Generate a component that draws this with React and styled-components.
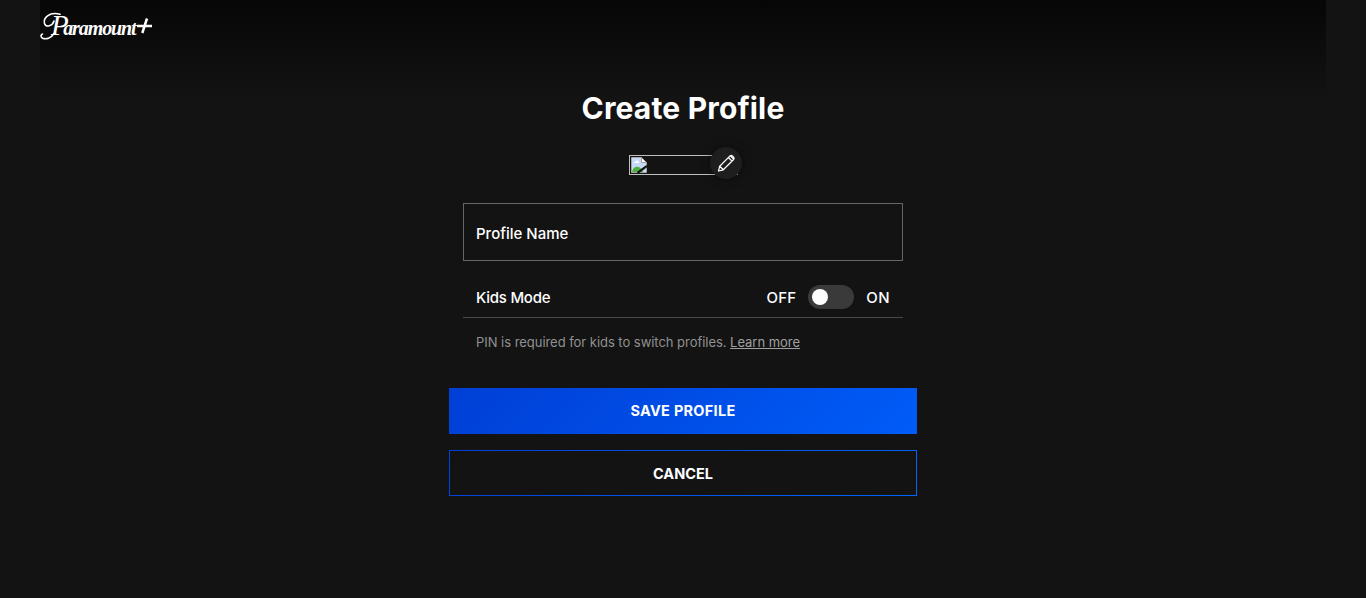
import React from "react";
import styled, { createGlobalStyle } from "styled-components";

const GlobalStyle = createGlobalStyle`
  *, *::before, *::after { box-sizing: border-box; }
  html, body { margin: 0; background: #131313; }
  body {
    color: #fff;
    font-family: Inter, "Liberation Sans", sans-serif;
    overflow: hidden;
  }
`;

const Page = styled.div`
  display: flex;
  flex-direction: column;
  height: 598px;
  background: #131313;
`;

const Header = styled.header`
  height: 100px;
  margin: 0 40px -10px;
  padding-top: 8px;
  background: linear-gradient(180deg, #060606 0%, #131313 100%);
  flex-shrink: 0;
`;

const Logo = styled.svg`
  display: block;
  overflow: visible;
`;

const Main = styled.main`
  display: flex;
  flex-direction: column;
  align-items: center;
`;

const Title = styled.h1`
  margin: 0;
  height: 36px;
  line-height: 36px;
  font-size: 30px;
  font-weight: 700;
  letter-spacing: 0.17px;
  white-space: nowrap;
`;

const Avatar = styled.div`
  position: relative;
  width: 108px;
  height: 20px;
  margin: 29px 0 28px;
`;

const BrokenImage = styled.div`
  width: 109px;
  height: 20px;
  padding: 1px;
  border: 1px solid #c0c0c0;
`;

const EditButton = styled.button`
  position: absolute;
  left: 81px;
  top: -8px;
  width: 32px;
  height: 32px;
  display: grid;
  place-items: center;
  padding: 0;
  border: 0;
  border-radius: 50%;
  background: #1e1e1e;
  box-shadow: 0 0 10px rgba(0, 0, 0, 0.5);
`;

const Form = styled.form`
  width: 440px;
  display: flex;
  flex-direction: column;
`;

const NameField = styled.label`
  height: 58px;
  padding: 2px 12px 0;
  display: flex;
  align-items: center;
  border: 1px solid #666;
  font-size: 15px;
  font-weight: 500;
`;

const KidsRow = styled.div`
  height: 57px;
  padding: 16px 13px 0;
  display: flex;
  align-items: center;
  border-bottom: 1px solid #484848;
  font-size: 15px;
  font-weight: 500;
`;

const Label = styled.span`
  letter-spacing: ${({ $tracking }) => $tracking || "0"};
  white-space: nowrap;
`;

const SwitchGroup = styled.div`
  margin-left: auto;
  display: flex;
  align-items: center;
  gap: 12px;
`;

const Switch = styled.span`
  width: 46px;
  height: 24px;
  padding: 4px;
  border-radius: 12px;
  background: #3a3a3a;
`;

const Knob = styled.span`
  display: block;
  width: 16px;
  height: 16px;
  border-radius: 50%;
  background: #fff;
`;

const Hint = styled.p`
  height: 20px;
  margin: 14px 13px 36px;
  line-height: 20px;
  font-size: 13px;
  letter-spacing: -0.04px;
  color: #919191;
  white-space: nowrap;
`;

const HintLink = styled.a`
  color: #a0a0a0;
  text-decoration: underline;
`;

const Actions = styled.div`
  display: flex;
  flex-direction: column;
  gap: 16px;
  margin: 0 -14px;
`;

const Button = styled.button`
  height: 46px;
  padding: ${({ $outline }) => ($outline ? "0" : "0 0 1px")};
  color: #fff;
  font: 700 14.5px Inter, "Liberation Sans", sans-serif;
  letter-spacing: ${({ $tracking }) => $tracking || "0"};
  border: ${({ $outline }) => ($outline ? "1px solid" : "0")};
  border-image: ${({ $outline }) => ($outline ? "linear-gradient(135deg, #0041d6, #0064ff) 1" : "none")};
  background: ${({ $outline }) => ($outline ? "transparent" : "linear-gradient(135deg, #003fd5, #005cf8)")};
`;

const Wordmark = styled.text`
  fill: #fff;
  font-family: "Liberation Serif", serif;
  font-style: italic;
  font-weight: 700;
  font-size: 20px;
  letter-spacing: -1.1px;
`;

const Initial = styled.tspan`
  font-size: 29px;
  font-weight: 400;
  letter-spacing: 0;
`;

function ParamountLogo() {
  return (
    <Logo width="114" height="34" viewBox="0 0 114 34" aria-label="Paramount+">
      <path
        d="M20 6.2C9 3.5 3 10 4.5 15.5C6 20 12.5 18 14 13M14 25.5C11 30.5 6 31.5 2.5 30.2C.5 29 .5 26.5 2.5 26"
        fill="none"
        stroke="#fff"
        strokeWidth="1.6"
        strokeLinecap="round"
      />
      <Wordmark x="11" y="26.5"><Initial>P</Initial><tspan dx="-5.5">aramount</tspan></Wordmark>
      <path d="M107 10.5 102.3 25M97 18H112" stroke="#fff" strokeWidth="2.5" />
    </Logo>
  );
}

function Broken() {
  return (
    <svg width="16" height="16" viewBox="0 0 16 16">
      <path d="M.5.5h10l5 5v10H.5z" fill="#c5d8f5" stroke="#a5a5a5" />
      <path d="M1 15c1-6 7-7 10-2l1 2z" fill="#4caf3c" />
      <path d="M3 6c0-2 2-1 2-2 2-1 3 0 3 2z" fill="#fff" />
      <path d="M10.5.5v5h5z" fill="#fff" stroke="#a5a5a5" />
      <path d="M6.5 16 16 9" stroke="#131313" strokeWidth="2.2" />
    </svg>
  );
}

function Pencil() {
  return (
    <svg width="20" height="20" viewBox="0 0 20 20" fill="none" stroke="#fff" strokeWidth="1.25" strokeLinejoin="round">
      <path d="M2.5 18 3.7 13.2 14 2.9Q15.2 1.8 16.4 2.9L17.6 4.1Q18.7 5.3 17.6 6.5L7.3 16.8ZM12.4 4.5 16 8.1M14.3 2.7 17.8 6.2M3.7 13.2 7.3 16.8" />
    </svg>
  );
}

export default function App() {
  return (
    <>
      <GlobalStyle />
      <Page>
        <Header><ParamountLogo /></Header>
        <Main>
          <Title>Create Profile</Title>
          <Avatar>
            <BrokenImage><Broken /></BrokenImage>
            <EditButton type="button" aria-label="Edit"><Pencil /></EditButton>
          </Avatar>
          <Form>
            <NameField><Label>Profile Name</Label></NameField>
            <KidsRow>
              <Label $tracking="-0.25px">Kids Mode</Label>
              <SwitchGroup>
                <Label $tracking="0.2px">OFF</Label>
                <Switch><Knob /></Switch>
                <Label $tracking="0.4px">ON</Label>
              </SwitchGroup>
            </KidsRow>
            <Hint>PIN is required for kids to switch profiles. <HintLink>Learn more</HintLink></Hint>
            <Actions>
              <Button type="button" $tracking="0.28px">SAVE PROFILE</Button>
              <Button type="button" $outline>CANCEL</Button>
            </Actions>
          </Form>
        </Main>
      </Page>
    </>
  );
}
